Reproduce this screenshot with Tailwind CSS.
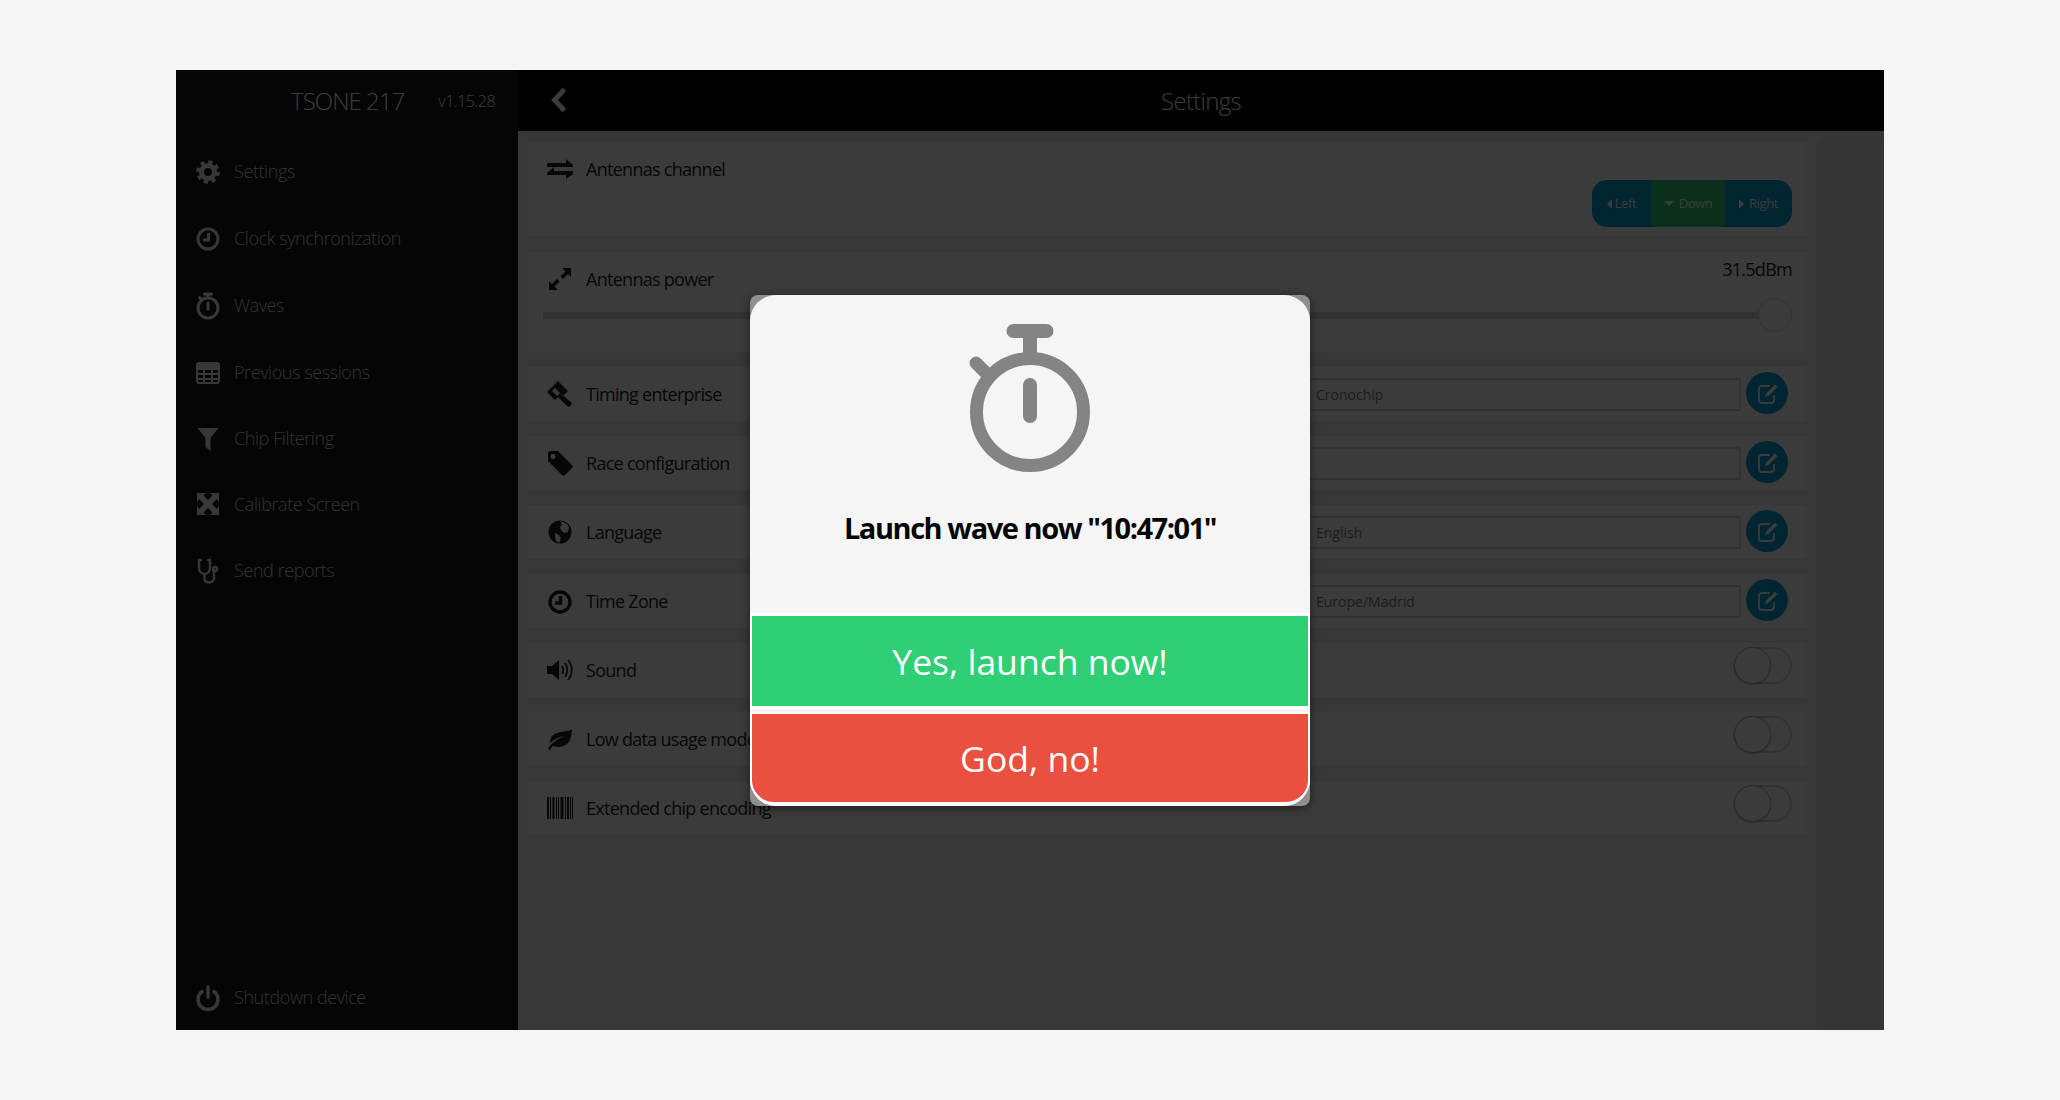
<!DOCTYPE html>
<html lang="en">
<head>
  <meta charset="UTF-8" />
  <title>TSONE 217 Settings</title>
  <script src="https://cdn.jsdelivr.net/npm/@tailwindcss/browser@4"></script>
</head>
<body class="bg-[#f6f5f6] h-screen overflow-hidden pt-[70px] font-['Open_Sans',sans-serif]">
  <div class="relative flex w-[1708px] h-[960px] ml-[176px] overflow-hidden">

    <!-- Sidebar -->
    <aside class="w-[342px] shrink-0 bg-[#161616] flex flex-col text-[#d9d9d9]">
      <div class="h-[61px] flex items-center pl-[115px] text-white font-light">
        <span class="text-[24px] tracking-[-0.04em]">TSONE 217</span>
        <span class="text-[16px] tracking-[-0.03em] ml-[34px]">v1.15.28</span>
      </div>
      <nav class="flex flex-col flex-1 pt-[7px] text-[18px] font-light tracking-[-0.023em]">
        <a class="h-[67px] flex items-center pl-[20px] gap-[14px]">
          <svg class="w-[24px] h-[24px] text-[#eee]" viewBox="0 0 24 24" fill="none" stroke="currentColor"><circle cx="12" cy="12" r="6.5" stroke-width="5"/><circle cx="12" cy="12" r="10" stroke-width="3.5" stroke-dasharray="4 3.85"/></svg>
          Settings
        </a>
        <a class="h-[67px] flex items-center pl-[20px] gap-[14px]">
          <svg class="w-[24px] h-[24px] text-[#eee]" viewBox="0 0 24 24" fill="none" stroke="currentColor" stroke-width="3"><circle cx="12" cy="12" r="10"/><path d="M12.5 6v7H7"/></svg>
          Clock synchronization
        </a>
        <a class="h-[67px] flex items-center pl-[20px] gap-[14px]">
          <svg class="w-[24px] h-[28px] text-[#eee]" viewBox="0 0 24 28" fill="none" stroke="currentColor" stroke-width="3" stroke-linecap="round"><circle cx="12" cy="16" r="10"/><path d="M8.5 2h7M12 2v3M3.5 5.5l2 2M12 11v6"/></svg>
          Waves
        </a>
        <a class="h-[67px] flex items-center pl-[20px] gap-[14px]">
          <svg class="w-[24px] h-[22px] text-[#eee]" viewBox="0 0 24 22" fill="none" stroke="currentColor"><rect x="1" y="1" width="22" height="20" rx="2" stroke-width="2"/><path d="M1 7h22M1 12h22M1 17h22M8 6v15M16 6v15" stroke-width="2"/><path d="M1 3.500h22" stroke-width="5"/></svg>
          Previous sessions
        </a>
        <a class="h-[65px] flex items-center pl-[20px] gap-[14px]">
          <svg class="w-[24px] h-[24px] text-[#eee]" viewBox="0 0 24 24" fill="currentColor"><path d="M1.500 1h21L14.500 11v13l-5-4v-9z"/></svg>
          Chip Filtering
        </a>
        <a class="h-[66px] flex items-center pl-[20px] gap-[14px]">
          <svg class="w-[24px] h-[24px] text-[#eee]" viewBox="0 0 24 24" fill="currentColor"><path d="M1 1h9L7.500 3.500 12 8l4.500-4.500L14 1h9v9l-2.500-2.500L16 12l4.500 4.500L23 14v9h-9l2.500-2.500L12 16l-4.500 4.500L10 23H1v-9l2.500 2.500L8 12 3.500 7.500 1 10z"/></svg>
          Calibrate Screen
        </a>
        <a class="h-[67px] flex items-center pl-[20px] gap-[14px]">
          <svg class="w-[24px] h-[26px] text-[#eee]" viewBox="0 0 24 26" fill="none" stroke="currentColor" stroke-width="2.400" stroke-linecap="round"><path d="M5 2H3v8c0 4 3 6 5.500 6S14 14 14 10V2h-2"/><path d="M8.500 16v4c0 3 2 4.500 4.500 4.500s5-1.500 5-4.500v-6"/><circle cx="19" cy="11" r="2"/></svg>
          Send reports
        </a>
        <a class="h-[67px] flex items-center pl-[20px] gap-[14px] mt-auto mb-[-1px]">
          <svg class="w-[24px] h-[26px] text-[#eee]" viewBox="0 0 24 26" fill="none" stroke="currentColor" stroke-width="3.500" stroke-linecap="round"><path d="M6 6.500a10 10 0 1 0 12 0"/><path d="M12 2v10"/></svg>
          Shutdown device
        </a>
      </nav>
    </aside>

    <!-- Main -->
    <main class="flex-1 flex flex-col bg-[#ececec] min-w-0">
      <header class="h-[61px] shrink-0 bg-black relative flex items-center justify-center text-white font-light text-[24px] tracking-[-0.03em]">
        <svg class="absolute left-[33px] top-[18px] w-[15px] h-[24px]" viewBox="0 0 15 24" fill="none" stroke="currentColor" stroke-width="5" stroke-linecap="round"><path d="M12 3 3.500 12l8.500 9"/></svg>
        Settings
      </header>
      <div class="flex flex-1 min-h-0">
        <section class="w-[1279px] ml-[10px] pt-[11px] flex flex-col gap-[15px] text-[18px] tracking-[-0.04em] text-[#222]">

          <div class="h-[94px] bg-white flex flex-col pr-[15px]">
            <div class="h-[54px] flex items-center pl-[19px] gap-[13px]">
              <svg class="w-[26px] h-[22px]" viewBox="0 0 26 22" fill="currentColor"><path d="M0 5h19V1l7 6v2H0zM26 13H7V9L0 15v2h19v4l7-5z"/></svg>
              Antennas channel
            </div>
            <div class="self-end -mt-[16px] h-[47px] w-[200px] rounded-[15px] overflow-hidden flex text-[13px] text-white tracking-[-0.03em]">
              <span class="w-[59px] bg-[#00a0d8] flex items-center justify-center gap-[3px]"><i class="border-y-[5px] border-r-[5px] border-y-transparent border-r-white"></i>Left</span>
              <span class="w-[74px] bg-[#2ecc71] flex items-center justify-center gap-[5px]"><i class="border-x-[5px] border-t-[5px] border-x-transparent border-t-white"></i>Down</span>
              <span class="w-[67px] bg-[#00a0d8] flex items-center justify-center gap-[5px]"><i class="border-y-[5px] border-l-[5px] border-y-transparent border-l-white"></i>Right</span>
            </div>
          </div>

          <div class="h-[100px] mt-[1px] bg-white flex flex-col pr-[15px] relative">
            <div class="h-[54px] flex items-center pl-[19px] gap-[13px]">
              <svg class="w-[26px] h-[24px]" viewBox="0 0 26 24" fill="currentColor"><path d="M15 1h9v9l-3-3-5 5-2.500-2.500 5-5zM11 23H2v-9l3 3 5-5 2.500 2.500-5 5z"/></svg>
              Antennas power
              <span class="ml-auto -mt-[19px]">31.5dBm</span>
            </div>
            <div class="absolute left-[15px] right-[47px] top-[60px] h-[7px] bg-[#d8d8d8]"></div>
            <div class="absolute right-[15px] top-[46px] w-[34px] h-[34px] rounded-full bg-white border border-[#d8d8d8]"></div>
          </div>

          <div class="h-[54px] bg-white flex items-center pl-[19px] pr-[19px] gap-[13px]">
            <svg class="w-[26px] h-[26px]" viewBox="0 0 26 26" fill="currentColor"><path d="M11 0l10 10-5 5-10-10zM3 8l5-5 2 2-5 5zM13 12l-3 3 10 10c1 1 2 1 3 0l1-1c1-1 1-2 0-3zM0 11l3-3 8 8-3 3z"/></svg>
            Timing enterprise
            <div class="ml-auto h-[33px] w-[436px] mt-[1px] border-2 border-[#d8d8d8] rounded-[2px] flex items-center pl-[9px] text-[14px] tracking-normal text-[#808080]">Cronochip</div>
            <button class="-ml-[8px] w-[42px] h-[42px] -mt-[3px] rounded-full bg-[#00a0d8] text-white flex items-center justify-center">
              <svg class="w-[24px] h-[24px] ml-[2px]" viewBox="0 0 24 24" fill="none" stroke="currentColor" stroke-width="1.800"><path d="M18 14v5a3 3 0 0 1-3 3H6a3 3 0 0 1-3-3V8a3 3 0 0 1 3-3h8"/><path d="M10 12.500 19 3.500l2.500 2.500-9 9-3.500 1z" fill="currentColor" stroke="none"/></svg>
            </button>
          </div>

          <div class="h-[54px] bg-white flex items-center pl-[19px] pr-[19px] gap-[13px]">
            <svg class="w-[26px] h-[26px]" viewBox="0 0 26 26" fill="currentColor"><path fill-rule="evenodd" d="M3 1h8l14 14c1 1 1 2 0 3l-7 7c-1 1-2 1-3 0L1 11V3c0-1 1-2 2-2zm3 3a2.500 2.500 0 1 0 .01 0z"/></svg>
            Race configuration
            <div class="ml-auto h-[33px] w-[436px] mt-[1px] border-2 border-[#d8d8d8] rounded-[2px]"></div>
            <button class="-ml-[8px] w-[42px] h-[42px] -mt-[3px] rounded-full bg-[#00a0d8] text-white flex items-center justify-center">
              <svg class="w-[24px] h-[24px] ml-[2px]" viewBox="0 0 24 24" fill="none" stroke="currentColor" stroke-width="1.800"><path d="M18 14v5a3 3 0 0 1-3 3H6a3 3 0 0 1-3-3V8a3 3 0 0 1 3-3h8"/><path d="M10 12.500 19 3.500l2.500 2.500-9 9-3.500 1z" fill="currentColor" stroke="none"/></svg>
            </button>
          </div>

          <div class="h-[54px] bg-white flex items-center pl-[19px] pr-[19px] gap-[13px]">
            <svg class="w-[26px] h-[26px]" viewBox="0 0 26 26"><circle cx="13" cy="13" r="11.500" fill="currentColor"/><path d="M13 2c3 1 7 2 9 6l-1 5-4 1-3-3-1-3 2-2zM8 14l4 2 2 3-2 5-3-2-1-4z" fill="#fff"/></svg>
            Language
            <div class="ml-auto h-[33px] w-[436px] mt-[1px] border-2 border-[#d8d8d8] rounded-[2px] flex items-center pl-[9px] text-[14px] tracking-normal text-[#808080]">English</div>
            <button class="-ml-[8px] w-[42px] h-[42px] -mt-[3px] rounded-full bg-[#00a0d8] text-white flex items-center justify-center">
              <svg class="w-[24px] h-[24px] ml-[2px]" viewBox="0 0 24 24" fill="none" stroke="currentColor" stroke-width="1.800"><path d="M18 14v5a3 3 0 0 1-3 3H6a3 3 0 0 1-3-3V8a3 3 0 0 1 3-3h8"/><path d="M10 12.500 19 3.500l2.500 2.500-9 9-3.500 1z" fill="currentColor" stroke="none"/></svg>
            </button>
          </div>

          <div class="h-[54px] bg-white flex items-center pl-[19px] pr-[19px] gap-[13px]">
            <svg class="w-[26px] h-[26px]" viewBox="0 0 26 26" fill="none" stroke="currentColor" stroke-width="3.400"><circle cx="13" cy="14" r="10"/><path d="M13.500 8v7H8"/></svg>
            Time Zone
            <div class="ml-auto h-[33px] w-[436px] mt-[1px] border-2 border-[#d8d8d8] rounded-[2px] flex items-center pl-[9px] text-[14px] tracking-normal text-[#808080]">Europe/Madrid</div>
            <button class="-ml-[8px] w-[42px] h-[42px] -mt-[3px] rounded-full bg-[#00a0d8] text-white flex items-center justify-center">
              <svg class="w-[24px] h-[24px] ml-[2px]" viewBox="0 0 24 24" fill="none" stroke="currentColor" stroke-width="1.800"><path d="M18 14v5a3 3 0 0 1-3 3H6a3 3 0 0 1-3-3V8a3 3 0 0 1 3-3h8"/><path d="M10 12.500 19 3.500l2.500 2.500-9 9-3.500 1z" fill="currentColor" stroke="none"/></svg>
            </button>
          </div>

          <div class="h-[54px] bg-white flex items-center pl-[19px] pr-[15px] gap-[13px]">
            <svg class="w-[26px] h-[24px]" viewBox="0 0 26 24" fill="none" stroke="currentColor" stroke-width="1.800"><path d="M0 8h5l7-6v20l-7-6H0z" fill="currentColor" stroke="none"/><path d="M15 8c1.500 2 1.500 6 0 8M18 5c3 4 3 10 0 14M21 2c5 6 5 14 0 20"/></svg>
            Sound
            <div class="ml-auto -mt-[9px] w-[58px] h-[37px] rounded-full border-2 border-[#d8d8d8] relative">
              <div class="absolute -left-[2px] -top-[2px] w-[37px] h-[37px] rounded-full bg-white border border-[#b8b8b8] shadow-[0_1px_2px_rgba(0,0,0,.3)]"></div>
            </div>
          </div>

          <div class="h-[54px] bg-white flex items-center pl-[19px] pr-[15px] gap-[13px]">
            <svg class="w-[26px] h-[22px]" viewBox="0 0 26 22" fill="currentColor"><path d="M25 1C20 5 8 2 4 10c-1 2-1 4-.500 5C7 11 12 9 17 8 11 11 4 15 1 21l2 1c1-2 2-3 3-4 6 2 14 1 17-6 1-3 2-7 2-11z"/></svg>
            <span>Low data usage mode</span>
            <div class="ml-auto -mt-[9px] w-[58px] h-[37px] rounded-full border-2 border-[#d8d8d8] relative">
              <div class="absolute -left-[2px] -top-[2px] w-[37px] h-[37px] rounded-full bg-white border border-[#b8b8b8] shadow-[0_1px_2px_rgba(0,0,0,.3)]"></div>
            </div>
          </div>

          <div class="h-[54px] bg-white flex items-center pl-[19px] pr-[15px] gap-[13px]">
            <svg class="w-[26px] h-[22px]" viewBox="0 0 26 22" fill="currentColor"><path d="M0 0h2v22H0zM3 0h1v22H3zM5.500 0h2v22h-2zM9 0h1v22H9zM11 0h1v22h-1zM13.500 0h3v22h-3zM18 0h1v22h-1zM20 0h2v22h-2zM23 0h1v22h-1zM25 0h1v22h-1z"/></svg>
            Extended chip encoding
            <div class="ml-auto -mt-[9px] w-[58px] h-[37px] rounded-full border-2 border-[#d8d8d8] relative">
              <div class="absolute -left-[2px] -top-[2px] w-[37px] h-[37px] rounded-full bg-white border border-[#b8b8b8] shadow-[0_1px_2px_rgba(0,0,0,.3)]"></div>
            </div>
          </div>
        </section>
        <div class="w-[67px] ml-auto mt-[4px] bg-[#e4e4e4] rounded-t-[14px]"></div>
      </div>
    </main>

    <!-- Overlay + dialog -->
    <div class="absolute inset-0 bg-[rgba(0,0,0,.77)] flex items-center justify-center">
      <div class="w-[560px] h-[511px] rounded-[8px] bg-[#8f8f8f] shadow-[0_2px_10px_rgba(0,0,0,.5)]">
        <div class="h-full rounded-[26px] overflow-hidden bg-[#f5f5f5] flex flex-col items-center border-b-[2px] border-white">
          <svg class="w-[124px] h-[150px] mt-[27px] text-[#848484]" viewBox="0 0 124 150" fill="none" stroke="currentColor" stroke-linecap="round">
            <circle cx="62" cy="90" r="53.500" stroke-width="13"/>
            <path d="M45.500 9h33" stroke-width="14"/>
            <path d="M62 12v20" stroke-width="14" stroke-linecap="butt"/>
            <path d="M62 63v31" stroke-width="14"/>
            <path d="M8 41l12 12" stroke-width="13"/>
          </svg>
          <h1 class="mt-[34px] text-[29px] leading-[44px] font-bold tracking-[-0.05em] text-[#050505]">Launch wave now "10:47:01"</h1>
          <div class="mt-auto w-full flex flex-col gap-[3px]">
            <button class="h-[96px] pt-[2px] border-x-[2px] border-y-[3px] border-white bg-[#2fcf75] text-white text-[35.5px]">Yes, launch now!</button>
            <button class="h-[92px] pt-[2px] border-x-[2px] border-y-[2px] border-white bg-[#ea4f3f] text-white text-[35.5px] rounded-b-[24px]">God, no!</button>
          </div>
        </div>
      </div>
    </div>
  </div>
</body>
</html>
